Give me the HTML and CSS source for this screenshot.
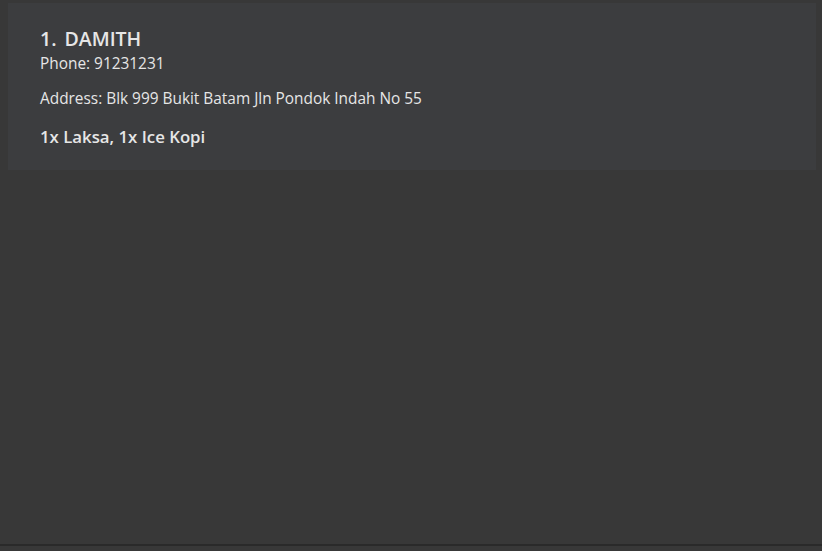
FILE: index.html
```html
<!DOCTYPE html>
<html>
<head>
<meta charset="utf-8">
<link rel="stylesheet" href="styles.css">
</head>
<body>
<div class="page">
  <div class="list">
    <div class="card">
      <div class="title"><span class="index">1.</span><span class="name">DAMITH</span></div>
      <div class="phone">Phone: 91231231</div>
      <div class="address">Address: Blk 999 Bukit Batam Jln Pondok Indah No 55</div>
      <div class="items">1x Laksa, 1x Ice Kopi</div>
    </div>
  </div>
  <div class="footer"></div>
</div>
</body>
</html>
```
FILE: styles.css
```css
html, body {
  margin: 0;
  padding: 0;
  height: 100%;
  background: #383838;
}
.page {
  height: 551px;
  display: flex;
  flex-direction: column;
  font-family: "Open Sans", "Noto Sans", sans-serif;
  color: #e6e6e6;
}
.list {
  flex: 1;
  padding: 3px 6px 0 8px;
  background: #383838;
}
.card {
  background: #3c3d3f;
  height: 167px;
  box-sizing: border-box;
  padding: 24px 32px 0 32px;
}
.title {
  font-size: 19.5px;
  font-weight: 600;
  line-height: 24px;
  display: flex;
  gap: 8px;
}
.phone {
  font-size: 15.4px;
  line-height: 20px;
  margin-top: 3px;
}
.address {
  font-size: 15.4px;
  line-height: 20px;
  margin-top: 15px;
}
.items {
  font-size: 16.8px;
  font-weight: 600;
  line-height: 22px;
  margin-top: 17px;
}
.footer {
  height: 2px;
  background: #2a2a2a;
  margin-bottom: 5px;
}
```
